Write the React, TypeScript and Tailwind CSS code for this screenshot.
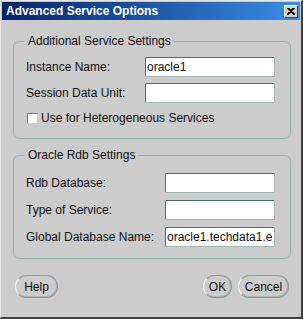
import React from 'react';

const field = 'h-[20px] bg-white border border-[#9fb8b4] border-t-[#4d6f6a] border-l-[#4d6f6a] rounded-[2px] pl-[1px] leading-[18px] whitespace-nowrap overflow-hidden';

function Row({ label, labelW, inputW, value, className }: { label: string; labelW: string; inputW: string; value?: string; className: string }) {
    return (
        <div className={`flex items-center h-[20px] ${className}`}>
            <span className={labelW}>{label}</span>
            <div className={`${field} ${inputW}`}>{value}</div>
        </div>
    );
}

function Btn({ children, w }: { children: React.ReactNode; w: string }) {
    return (
        <div className={`${w} h-[23px] flex items-center justify-center rounded-full border border-[#8a9996] border-l-[#f4f4f4] shadow-[inset_-1px_-1px_0_#a8b4b2]`}>
            {children}
        </div>
    );
}

export default function App() {
    return (
        <div className="w-[303px] h-[319px] bg-[#cccccc] border-t border-l border-t-[#e6e6e6] border-l-[#e6e6e6] border-b-2 border-r-2 border-b-[#404040] border-r-[#404040] p-[1px] flex flex-col font-['Liberation_Sans',Arial,sans-serif] text-[12px] text-[#111]">
            {/* title bar */}
            <div className="h-[18px] shrink-0 flex items-center justify-between bg-linear-to-r from-[#0a246a] to-[#3a8ee6]">
                <span className="ml-[4px] font-bold text-white leading-[14px]">Advanced Service Options</span>
                <div className="mr-[2px] w-[14px] h-[13px] bg-[#d4d0c8] border border-t-white border-l-white border-b-[#404040] border-r-[#404040] flex items-center justify-center">
                    <svg width="8" height="7" viewBox="0 0 8 7">
                        <path d="M0.5 0 L7.5 7 M1.5 0 L8 6.5 M7.5 0 L0.5 7 M6.5 0 L0 6.5" stroke="#000" strokeWidth="1.2" fill="none" />
                    </svg>
                </div>
            </div>

            {/* Additional Service Settings */}
            <fieldset className="mt-[14px] ml-[11px] w-[278px] border border-[#8fb5ad] rounded-[6px] pl-[12px] pb-[12px]">
                <legend className="ml-[-1px] px-[3px] leading-[14px]">Additional Service Settings</legend>
                <Row className="mt-[9px]" label="Instance Name:" labelW="w-[119px]" inputW="w-[130px]" value="oracle1" />
                <Row className="mt-[6px]" label="Session Data Unit:" labelW="w-[119px]" inputW="w-[130px]" />
                <div className="mt-[7px] h-[16px] flex items-center">
                    <div className="ml-[1px] w-[11px] h-[11px] bg-white border border-[#c8d4d2] border-t-[#6f7f7d] border-l-[#6f7f7d]" />
                    <span className="ml-[3px]">Use for Heterogeneous Services</span>
                </div>
            </fieldset>

            {/* Oracle Rdb Settings */}
            <fieldset className="mt-[9px] ml-[11px] w-[278px] border border-[#8fb5ad] rounded-[6px] pl-[12px] pb-[11px]">
                <legend className="ml-[-1px] px-[3px] leading-[14px]">Oracle Rdb Settings</legend>
                <Row className="mt-[11px]" label="Rdb Database:" labelW="w-[139px]" inputW="w-[110px]" />
                <Row className="mt-[7px]" label="Type of Service:" labelW="w-[139px]" inputW="w-[110px]" />
                <Row className="mt-[7px]" label="Global Database Name:" labelW="w-[139px]" inputW="w-[110px]" value="oracle1.techdata1.e" />
            </fieldset>

            {/* buttons */}
            <div className="mt-[16px] flex items-center justify-between pl-[13px] pr-[11px]">
                <Btn w="w-[43px]">Help</Btn>
                <div className="flex gap-[6px]">
                    <Btn w="w-[29px]">OK</Btn>
                    <Btn w="w-[51px]">Cancel</Btn>
                </div>
            </div>
        </div>
    );
}
